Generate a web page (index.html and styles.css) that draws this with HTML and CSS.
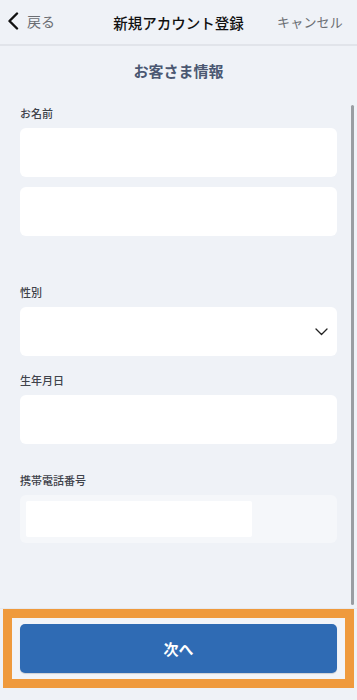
FILE: index.html
```html
<!DOCTYPE html>
<html lang="ja">
<head>
<meta charset="utf-8">
<link rel="stylesheet" href="styles.css">
</head>
<body>
<div class="app">
  <header class="nav">
    <div class="nav-back">
      <svg class="chev" width="12" height="18" viewBox="0 0 12 18"><path d="M10 1.5 L2.5 9 L10 16.5" fill="none" stroke="#111" stroke-width="2.4" stroke-linecap="round" stroke-linejoin="round"/></svg>
      <span>戻る</span>
    </div>
    <div class="nav-title">新規アカウント登録</div>
    <div class="nav-cancel">キャンセル</div>
  </header>
  <main class="content">
    <h1 class="section-title">お客さま情報</h1>
    <div class="group g-name">
      <label class="label">お名前</label>
      <div class="field"></div>
      <div class="field second"></div>
    </div>
    <div class="group g-gender">
      <label class="label">性別</label>
      <div class="field select">
        <svg width="13" height="8" viewBox="0 0 13 8"><path d="M1 1 L6.5 6.5 L12 1" fill="none" stroke="#222" stroke-width="1.3" stroke-linecap="round" stroke-linejoin="round"/></svg>
      </div>
    </div>
    <div class="group g-birth">
      <label class="label">生年月日</label>
      <div class="field"></div>
    </div>
    <div class="group g-phone">
      <label class="label">携帯電話番号</label>
      <div class="phone-box"><div class="phone-inner"></div></div>
    </div>
    <div class="scrollbar"></div>
  </main>
  <footer class="footer">
    <div class="highlight">
      <button class="next-btn">次へ</button>
    </div>
  </footer>
</div>
</body>
</html>
```

FILE: styles.css
```css
* { box-sizing: border-box; margin: 0; padding: 0; }
html, body { width: 357px; height: 700px; background: #eff2f7; overflow: hidden; }
body { font-family: "Noto Sans CJK JP", "Noto Sans", sans-serif; color: #222; }
.app { display: flex; flex-direction: column; height: 700px; position: relative; }
.nav {
  height: 46px;
  border-bottom: 2px solid #e1e4ea;
  display: flex;
  align-items: center;
  position: relative;
  padding: 0 14px 2px 7px;
}
.nav-back { display: flex; align-items: center; gap: 8px; font-size: 14px; color: #6b6e73; }
.chev { display: block; }
.nav-title {
  position: absolute; left: 0; right: 0; text-align: center;
  font-size: 14.5px; font-weight: 500; color: #111; pointer-events: none;
  top: 12px;
}
.nav-cancel { margin-left: auto; font-size: 13px; color: #6b6e73; letter-spacing: 0.2px; }
.content { position: relative; padding: 0 20px; flex: 0 0 auto; height: 562px; }
.section-title {
  margin-top: 14px; height: 22px; line-height: 22px;
  text-align: center; font-size: 15px; font-weight: 700; color: #4b5872;
}
.group { display: flex; flex-direction: column; }
.label { font-size: 11px; line-height: 16px; height: 16px; color: #3f434b; font-weight: 500; margin-bottom: 7px; }
.field { height: 49px; background: #fff; border-radius: 6px; }
.field.second { margin-top: 10px; }
.g-name { margin-top: 23px; }
.g-gender { margin-top: 48px; }
.g-birth { margin-top: 16px; }
.g-phone { margin-top: 28px; }
.select { display: flex; align-items: center; justify-content: flex-end; padding-right: 9px; }
.select svg { display: block; margin-top: 1px; }
.phone-box { height: 48px; background: #f5f7fa; border-radius: 6px; padding: 6px; }
.phone-inner { width: 226px; height: 36px; background: #fff; border-radius: 2px; }
.scrollbar {
  position: absolute; right: 3px; top: 59px; width: 3px; height: 500px;
  background: #9a9da2; border-radius: 2px;
}
.footer { border-top: 1px solid #e6e9ee; padding: 0 3px; }
.highlight {
  border: 9px solid #ef9a3d;
  height: 79px;
  padding: 6px 8px 0 8px;
  background: #f2f4f8;
  width: 351px;
}
.next-btn {
  width: 317px; height: 49px; border: none; border-radius: 5px;
  background: #2f6bb4; color: #fff;
  font-family: "Noto Sans CJK JP", sans-serif; font-size: 15px; font-weight: 700;
  box-shadow: 0 1px 1px rgba(0,0,0,0.15);
}
```
